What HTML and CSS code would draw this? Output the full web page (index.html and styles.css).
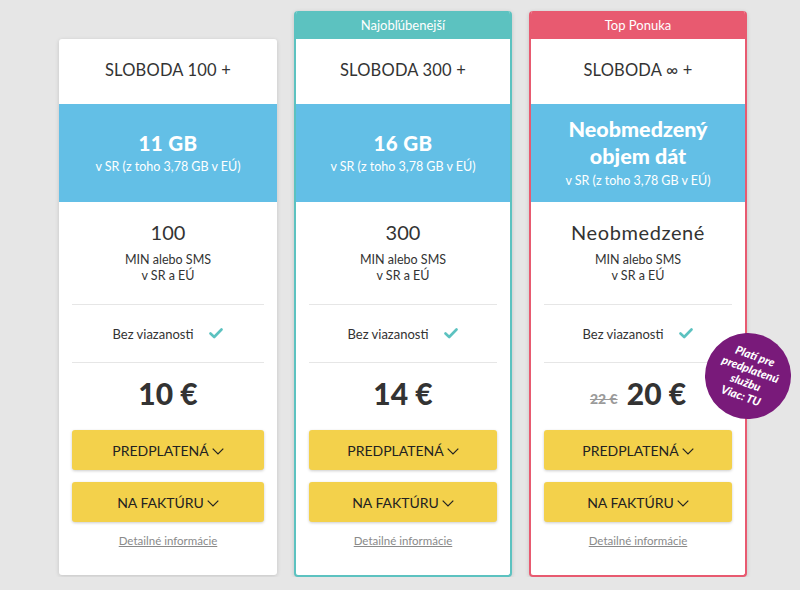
FILE: index.html
```html
<!DOCTYPE html>
<html lang="sk">
<head>
    <meta charset="UTF-8">
    <meta name="viewport" content="width=device-width, initial-scale=1.0">
    <title>Sloboda – tarify</title>
    <link rel="stylesheet" href="styles.css">
</head>
<body>
    <div class="plans">

        <div class="plan">
            <div class="card">
                <div class="plan-name">SLOBODA 100 +</div>
                <div class="data">
                    <div class="data-amount">11 GB</div>
                    <div class="data-note">v SR (z toho 3,78 GB v EÚ)</div>
                </div>
                <div class="body">
                    <div class="minutes">
                        <div class="minutes-count">100</div>
                        <div class="minutes-note">MIN alebo SMS<br>v SR a EÚ</div>
                    </div>
                    <div class="commit">
                        <span>Bez viazanosti</span>
                        <svg class="check" width="14" height="11" viewBox="0 0 14 11"><path d="M1.5 5.5 L5.2 9 L12.5 1.5" fill="none" stroke="#5cc2c0" stroke-width="2.6" stroke-linecap="round" stroke-linejoin="round"/></svg>
                    </div>
                    <div class="price">10 €</div>
                    <button class="btn">PREDPLATENÁ <svg class="chev" width="12" height="7" viewBox="0 0 12 7"><polyline points="0.7,0.7 6,6 11.3,0.7" fill="none" stroke="#222" stroke-width="1.2"/></svg></button>
                    <button class="btn">NA FAKTÚRU <svg class="chev" width="12" height="7" viewBox="0 0 12 7"><polyline points="0.7,0.7 6,6 11.3,0.7" fill="none" stroke="#222" stroke-width="1.2"/></svg></button>
                    <a class="details" href="#">Detailné informácie</a>
                </div>
            </div>
        </div>

        <div class="plan featured popular">
            <div class="card">
                <div class="ribbon">Najobľúbenejší</div>
                <div class="plan-name">SLOBODA 300 +</div>
                <div class="data">
                    <div class="data-amount">16 GB</div>
                    <div class="data-note">v SR (z toho 3,78 GB v EÚ)</div>
                </div>
                <div class="body">
                    <div class="minutes">
                        <div class="minutes-count">300</div>
                        <div class="minutes-note">MIN alebo SMS<br>v SR a EÚ</div>
                    </div>
                    <div class="commit">
                        <span>Bez viazanosti</span>
                        <svg class="check" width="14" height="11" viewBox="0 0 14 11"><path d="M1.5 5.5 L5.2 9 L12.5 1.5" fill="none" stroke="#5cc2c0" stroke-width="2.6" stroke-linecap="round" stroke-linejoin="round"/></svg>
                    </div>
                    <div class="price">14 €</div>
                    <button class="btn">PREDPLATENÁ <svg class="chev" width="12" height="7" viewBox="0 0 12 7"><polyline points="0.7,0.7 6,6 11.3,0.7" fill="none" stroke="#222" stroke-width="1.2"/></svg></button>
                    <button class="btn">NA FAKTÚRU <svg class="chev" width="12" height="7" viewBox="0 0 12 7"><polyline points="0.7,0.7 6,6 11.3,0.7" fill="none" stroke="#222" stroke-width="1.2"/></svg></button>
                    <a class="details" href="#">Detailné informácie</a>
                </div>
            </div>
        </div>

        <div class="plan featured top">
            <div class="card">
                <div class="ribbon">Top Ponuka</div>
                <div class="plan-name">SLOBODA ∞ +</div>
                <div class="data">
                    <div class="data-amount big">Neobmedzený<br>objem dát</div>
                    <div class="data-note">v SR (z toho 3,78 GB v EÚ)</div>
                </div>
                <div class="body">
                    <div class="minutes">
                        <div class="minutes-count wide">Neobmedzené</div>
                        <div class="minutes-note">MIN alebo SMS<br>v SR a EÚ</div>
                    </div>
                    <div class="commit">
                        <span>Bez viazanosti</span>
                        <svg class="check" width="14" height="11" viewBox="0 0 14 11"><path d="M1.5 5.5 L5.2 9 L12.5 1.5" fill="none" stroke="#5cc2c0" stroke-width="2.6" stroke-linecap="round" stroke-linejoin="round"/></svg>
                    </div>
                    <div class="price"><span class="old-price">22 €</span> 20 €</div>
                    <button class="btn">PREDPLATENÁ <svg class="chev" width="12" height="7" viewBox="0 0 12 7"><polyline points="0.7,0.7 6,6 11.3,0.7" fill="none" stroke="#222" stroke-width="1.2"/></svg></button>
                    <button class="btn">NA FAKTÚRU <svg class="chev" width="12" height="7" viewBox="0 0 12 7"><polyline points="0.7,0.7 6,6 11.3,0.7" fill="none" stroke="#222" stroke-width="1.2"/></svg></button>
                    <a class="details" href="#">Detailné informácie</a>
                </div>
            </div>
            <a class="sticker" href="#">Platí pre<br>predplatenú<br>službu<br>Viac: TU</a>
        </div>

    </div>
</body>
</html>
```

FILE: styles.css
```css
body { margin: 0; background-color: #e6e6e6; color: #333; font-family: "Lato", "Open Sans", sans-serif; }
.plans { display: flex; align-items: flex-start; gap: 17px; padding: 11px 0 0 59px; }
.plan { position: relative; width: 218px; }
.card { background-color: #fff; border-radius: 3px; box-shadow: 0 1px 4px rgba(0,0,0,0.15); overflow: hidden; }
.plan:not(.featured) .card { margin-top: 28px; }
.featured .card { border: 2px solid; border-top: none; border-radius: 4px; }
.popular .card { border-color: #5cc2c0; }
.top .card { border-color: #e85a70; }
.ribbon { height: 28px; line-height: 28px; text-align: center; color: #fff; font-size: 13px; margin: 0 -2px; }
.popular .ribbon { background-color: #5cc2c0; }
.top .ribbon { background-color: #e85a70; }
.featured .plan-name { margin: 0 -2px; }

.plan-name { height: 62px; padding-bottom: 3px; display: flex; align-items: center; justify-content: center; font-size: 16.5px; font-weight: 400; color: #333; letter-spacing: 0.2px; }
.data { height: 98px; background-color: #63bfe6; color: #fff; display: flex; flex-direction: column; justify-content: center; align-items: center; text-align: center; }
.featured .data { margin: 0 -2px; }
.data-amount { font-size: 20.5px; font-weight: 900; line-height: 26px; letter-spacing: 0.4px; }
.data-amount.big { font-size: 21.5px; line-height: 27px; letter-spacing: 0; }
.data-note { font-size: 12.5px; line-height: 18px; margin-top: 2px; }

.body { padding: 0 13px 26px; display: flex; flex-direction: column; }
.minutes { padding: 18px 0 20px; border-bottom: 1px solid #e6e6e6; text-align: center; }
.minutes-count { font-size: 20px; line-height: 24px; font-weight: 400; color: #333; }
.minutes-count.wide { letter-spacing: 0.6px; }
.minutes-note { margin-top: 8px; font-size: 12.5px; line-height: 16px; }
.commit { height: 57px; display: flex; align-items: center; justify-content: center; gap: 16px; font-size: 13px; border-bottom: 1px solid #e6e6e6; }
.price { padding-top: 14px; height: 32px; line-height: 32px; text-align: center; font-size: 30px; font-weight: 900; color: #333; }
.old-price { font-size: 14px; color: #9a9a9a; text-decoration: line-through; vertical-align: 1px; margin-right: 2px; }
.btn { margin-top: 21px; height: 40px; border: none; border-radius: 3px; background-color: #f3d14b; box-shadow: 0 1px 3px rgba(0,0,0,0.2); font-family: inherit; font-size: 14px; color: #222; display: flex; align-items: center; justify-content: center; gap: 3px; cursor: pointer; }
.btn + .btn { margin-top: 12px; }
.chev { margin-top: 2px; }
.details { margin-top: 11px; line-height: 16px; text-align: center; font-size: 11.5px; color: #8a8a8a; text-decoration: underline; }

.sticker { position: absolute; left: 176px; top: 322px; width: 86px; height: 86px; border-radius: 50%; background-color: #791a7a; color: #fff; font-size: 11.5px; font-weight: 900; font-style: italic; line-height: 14px; text-align: center; text-decoration: none; display: flex; align-items: center; justify-content: center; transform: rotate(20deg); }
```
